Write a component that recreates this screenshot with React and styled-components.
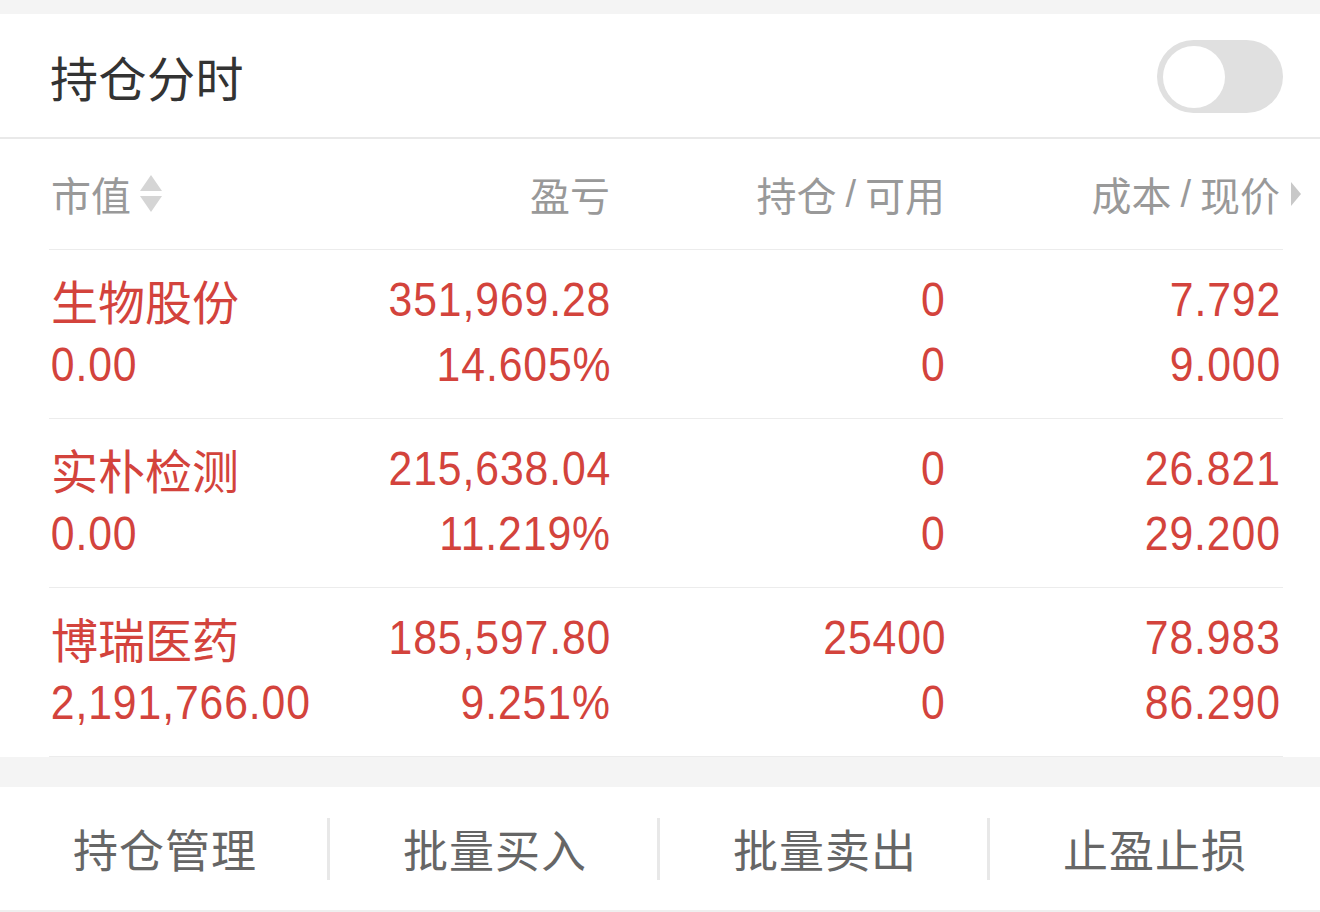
import React from "react";
import styled, { createGlobalStyle } from "styled-components";

const GlobalStyle = createGlobalStyle`
  html, body { margin: 0; padding: 0; background: #f4f4f4; }
  body { font-family: "Noto Sans CJK SC", "Noto Sans", sans-serif; }
`;

const Page = styled.div`
  width: 1320px;
  padding-top: 14px;
  background: #f4f4f4;
`;

const Card = styled.div`
  background: #fff;
`;

const TitleBar = styled.div`
  height: 125px;
  display: flex;
  align-items: center;
  justify-content: space-between;
  padding: 0 37px 0 50px;
  border-bottom: 2px solid #e9e9e9;
  box-sizing: border-box;
`;

const Title = styled.div`
  font-size: 48px;
  color: #333;
  letter-spacing: 0.5px;
`;

const Toggle = styled.div`
  width: 126px;
  height: 73px;
  border-radius: 37px;
  background: #e0e0e0;
  display: flex;
  align-items: center;
  padding-left: 6px;
  box-sizing: border-box;
  margin-top: 2px;
`;

const Knob = styled.div`
  width: 62px;
  height: 62px;
  border-radius: 50%;
  background: #fff;
`;

const Table = styled.div`
  padding: 0 37px 0 49px;
`;

const Row = styled.div`
  display: grid;
  grid-template-columns: 281px 280px 335px 338px;
  border-bottom: 1px solid #ececec;
  box-sizing: border-box;
  height: ${(p) => (p.$head ? "111px" : "169px")};
  align-items: ${(p) => (p.$head ? "center" : "start")};
  padding-top: ${(p) => (p.$head ? "0" : "17px")};
`;

const HeadCell = styled.div`
  position: relative;
  display: flex;
  align-items: center;
  justify-content: ${(p) => (p.$left ? "flex-start" : "flex-end")};
  padding-right: ${(p) => (p.$pr ? p.$pr : "0px")};
  padding-left: ${(p) => (p.$left ? "2px" : "0")};
  font-size: 40px;
  color: #999;
  line-height: 1;
  margin-top: 0px;
`;

const Slash = styled.span`
  margin: 0 9px;
  font-family: "Liberation Sans", sans-serif;
  font-size: 38px;
`;

const SortIcon = styled.svg`
  width: 24px;
  height: 40px;
  margin-left: 8px;
`;

const Arrow = styled.svg`
  position: absolute;
  right: -19px;
  top: 50%;
  width: 12px;
  height: 26px;
  transform: translateY(-50%);
`;

const Cell = styled.div`
  display: flex;
  flex-direction: column;
  align-items: ${(p) => (p.$left ? "flex-start" : "flex-end")};
  padding-right: ${(p) => (p.$pr ? p.$pr : "0px")};
  color: #d3433c;
`;

const Line = styled.div`
  height: 65px;
  line-height: 65px;
  white-space: nowrap;
`;

const Name = styled(Line)`
  font-size: 47px;
  padding-left: 2px;
`;

const Num = styled(Line)`
  font-family: "Liberation Sans", sans-serif;
  font-size: 48px;
  letter-spacing: 1px;
  margin-right: -1px;
  transform: scaleX(0.89);
  transform-origin: ${(p) => (p.$left ? "left center" : "right center")};
  padding-left: ${(p) => (p.$left ? "2px" : "0")};
`;

const Gap = styled.div`
  height: 30px;
  background: #f4f4f4;
`;

const Actions = styled.div`
  display: grid;
  grid-template-columns: repeat(4, 1fr);
  align-items: center;
  height: 125px;
  background: #fff;
  border-bottom: 2px solid #efefef;
  box-sizing: border-box;
`;

const Action = styled.div`
  height: 62px;
  display: flex;
  align-items: center;
  justify-content: center;
  font-size: 45px;
  color: #666;
  letter-spacing: 1px;
  border-left: ${(p) => (p.$first ? "none" : "3px solid #e8e8e8")};
  margin-left: ${(p) => (p.$first ? "0" : "-3px")};
`;

const rows = [
  { name: "生物股份", mv: "0.00", pl: "351,969.28", pct: "14.605%", pos: "0", avail: "0", cost: "7.792", price: "9.000" },
  { name: "实朴检测", mv: "0.00", pl: "215,638.04", pct: "11.219%", pos: "0", avail: "0", cost: "26.821", price: "29.200" },
  { name: "博瑞医药", mv: "2,191,766.00", pl: "185,597.80", pct: "9.251%", pos: "25400", avail: "0", cost: "78.983", price: "86.290" },
];

export default function App() {
  return (
    <>
      <GlobalStyle />
      <Page>
        <Card>
          <TitleBar>
            <Title>持仓分时</Title>
            <Toggle>
              <Knob />
            </Toggle>
          </TitleBar>
          <Table>
            <Row $head>
              <HeadCell $left>
                市值
                <SortIcon viewBox="0 0 24 40">
                  <path d="M12 1 L23 17 L1 17 Z" fill="#d5d5d5" />
                  <path d="M1 22 L23 22 L12 38 Z" fill="#d5d5d5" />
                </SortIcon>
              </HeadCell>
              <HeadCell>盈亏</HeadCell>
              <HeadCell>
                持仓<Slash>/</Slash>可用
              </HeadCell>
              <HeadCell $pr="3px">
                成本<Slash>/</Slash>现价
                <Arrow viewBox="0 0 12 26">
                  <path d="M1 1 L11 13 L1 25 Z" fill="#c8c8c8" />
                </Arrow>
              </HeadCell>
            </Row>
            {rows.map((r) => (
              <Row key={r.name}>
                <Cell $left>
                  <Name>{r.name}</Name>
                  <Num $left>{r.mv}</Num>
                </Cell>
                <Cell>
                  <Num>{r.pl}</Num>
                  <Num>{r.pct}</Num>
                </Cell>
                <Cell>
                  <Num>{r.pos}</Num>
                  <Num>{r.avail}</Num>
                </Cell>
                <Cell $pr="3px">
                  <Num>{r.cost}</Num>
                  <Num>{r.price}</Num>
                </Cell>
              </Row>
            ))}
          </Table>
        </Card>
        <Gap />
        <Actions>
          <Action $first>持仓管理</Action>
          <Action>批量买入</Action>
          <Action>批量卖出</Action>
          <Action>止盈止损</Action>
        </Actions>
      </Page>
    </>
  );
}
